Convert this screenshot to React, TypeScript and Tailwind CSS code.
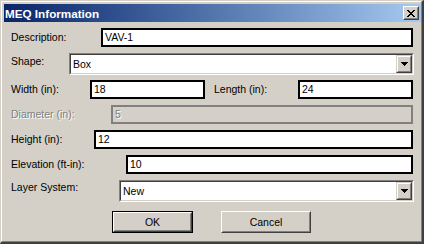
import React from 'react'

const font = "font-['Liberation_Sans',Arial,sans-serif]"

function Arrow() {
  return (
    <svg width="7" height="4" viewBox="0 0 7 4" shapeRendering="crispEdges">
      <rect x="0" y="0" width="7" height="1" fill="#000" />
      <rect x="1" y="1" width="5" height="1" fill="#000" />
      <rect x="2" y="2" width="3" height="1" fill="#000" />
      <rect x="3" y="3" width="1" height="1" fill="#000" />
    </svg>
  )
}

function TextBox({ value, width, disabled }: { value: string; width: string; disabled?: boolean }) {
  return (
    <div
      className={`${width} flex h-[19px] items-center pl-[2px] ${
        disabled
          ? 'border-2 border-[#808080] bg-[#d4d0c8] text-[#808080] [text-shadow:1px_1px_0_#fff]'
          : 'border-2 border-black bg-white text-black'
      }`}
    >
      {value}
    </div>
  )
}

function Combo({ value, width }: { value: string; width: string }) {
  return (
    <div className={`${width} h-[22px] border border-t-[#808080] border-l-[#808080] border-r-white border-b-white`}>
      <div className="flex h-full border border-t-[#404040] border-l-[#404040] border-r-[#d4d0c8] border-b-[#d4d0c8] bg-white">
        <div className="flex flex-1 items-center pl-[2px] text-black">{value}</div>
        <div className="h-full w-[16px] border border-t-[#d4d0c8] border-l-[#d4d0c8] border-r-[#404040] border-b-[#404040]">
          <div className="flex h-full items-center justify-center border border-t-white border-l-white border-r-[#808080] border-b-[#808080] bg-[#d4d0c8]">
            <Arrow />
          </div>
        </div>
      </div>
    </div>
  )
}

function Button({ label, width, primary }: { label: string; width: string; primary?: boolean }) {
  const bevel = (
    <div className="h-full border border-t-white border-l-white border-r-[#404040] border-b-[#404040]">
      <div className="flex h-full items-center justify-center border border-t-[#d4d0c8] border-l-[#d4d0c8] border-r-[#808080] border-b-[#808080] bg-[#d4d0c8] text-black">
        {label}
      </div>
    </div>
  )
  return (
    <div className={`${width} h-[22px] ${primary ? 'border border-black' : ''}`}>{bevel}</div>
  )
}

export default function App() {
  return (
    <div className={`${font} h-[244px] w-[424px] border-t border-l border-r-2 border-b-2 border-t-[#d4d0c8] border-l-[#d4d0c8] border-r-[#404040] border-b-[#404040] bg-[#d4d0c8] text-[10.5px] leading-[13px]`}>
      <div className="flex h-full flex-col border border-t-white border-l-white border-r-[#808080] border-b-[#808080] pt-[2px] pl-[2px]">
        {/* title bar */}
        <div className="flex h-[18px] items-center bg-gradient-to-r from-[#0a246a] to-[#a6caf0] pr-[2px] pl-[1px]">
          <span className="flex-1 text-[11.7px] font-bold text-white">MEQ Information</span>
          <div className="h-[14px] w-[16px] border border-t-white border-l-white border-r-[#404040] border-b-[#404040]">
            <div className="flex h-full items-center justify-center border border-t-[#d4d0c8] border-l-[#d4d0c8] border-r-[#808080] border-b-[#808080] bg-[#d4d0c8]">
              <svg width="8" height="7" viewBox="0 0 8 7" shapeRendering="crispEdges">
                <path d="M0 0h2v1h-2z M6 0h2v1h-2z M1 1h2v1h-2z M5 1h2v1h-2z M2 2h4v1h-4z M3 3h2v1h-2z M2 4h4v1h-4z M1 5h2v1h-2z M5 5h2v1h-2z M0 6h2v1h-2z M6 6h2v1h-2z" fill="#000" />
              </svg>
            </div>
          </div>
        </div>

        <div className="flex flex-col pl-[7px] text-black">
          <div className="mt-[6px] flex h-[19px] items-center">
            <span className="w-[90px]">Description:</span>
            <TextBox value="VAV-1" width="w-[312px]" />
          </div>

          <div className="mt-[6px] flex h-[22px] items-start">
            <span className="w-[58px] pt-[2px]">Shape:</span>
            <Combo value="Box" width="w-[345px]" />
          </div>

          <div className="mt-[5px] flex h-[19px] items-center">
            <span className="w-[79px]">Width (in):</span>
            <TextBox value="18" width="w-[115px]" />
            <span className="ml-[9px] w-[84px]">Length (in):</span>
            <TextBox value="24" width="w-[115px]" />
          </div>

          <div className="mt-[6px] flex h-[19px] items-center">
            <span className="w-[100px] text-[#808080] [text-shadow:1px_1px_0_#fff]">Diameter (in):</span>
            <TextBox value="5" width="w-[302px]" disabled />
          </div>

          <div className="mt-[6px] flex h-[19px] items-center">
            <span className="w-[83px]">Height (in):</span>
            <TextBox value="12" width="w-[319px]" />
          </div>

          <div className="mt-[6px] flex h-[19px] items-center">
            <span className="w-[115px]">Elevation (ft-in):</span>
            <TextBox value="10" width="w-[287px]" />
          </div>

          <div className="mt-[6px] flex h-[22px] items-start">
            <span className="w-[108px] pt-[1px]">Layer System:</span>
            <Combo value="New" width="w-[295px]" />
          </div>

          <div className="mt-[9px] flex">
            <div className="ml-[101px]">
              <Button label="OK" width="w-[81px]" primary />
            </div>
            <div className="ml-[28px]">
              <Button label="Cancel" width="w-[90px]" />
            </div>
          </div>
        </div>
      </div>
    </div>
  )
}
